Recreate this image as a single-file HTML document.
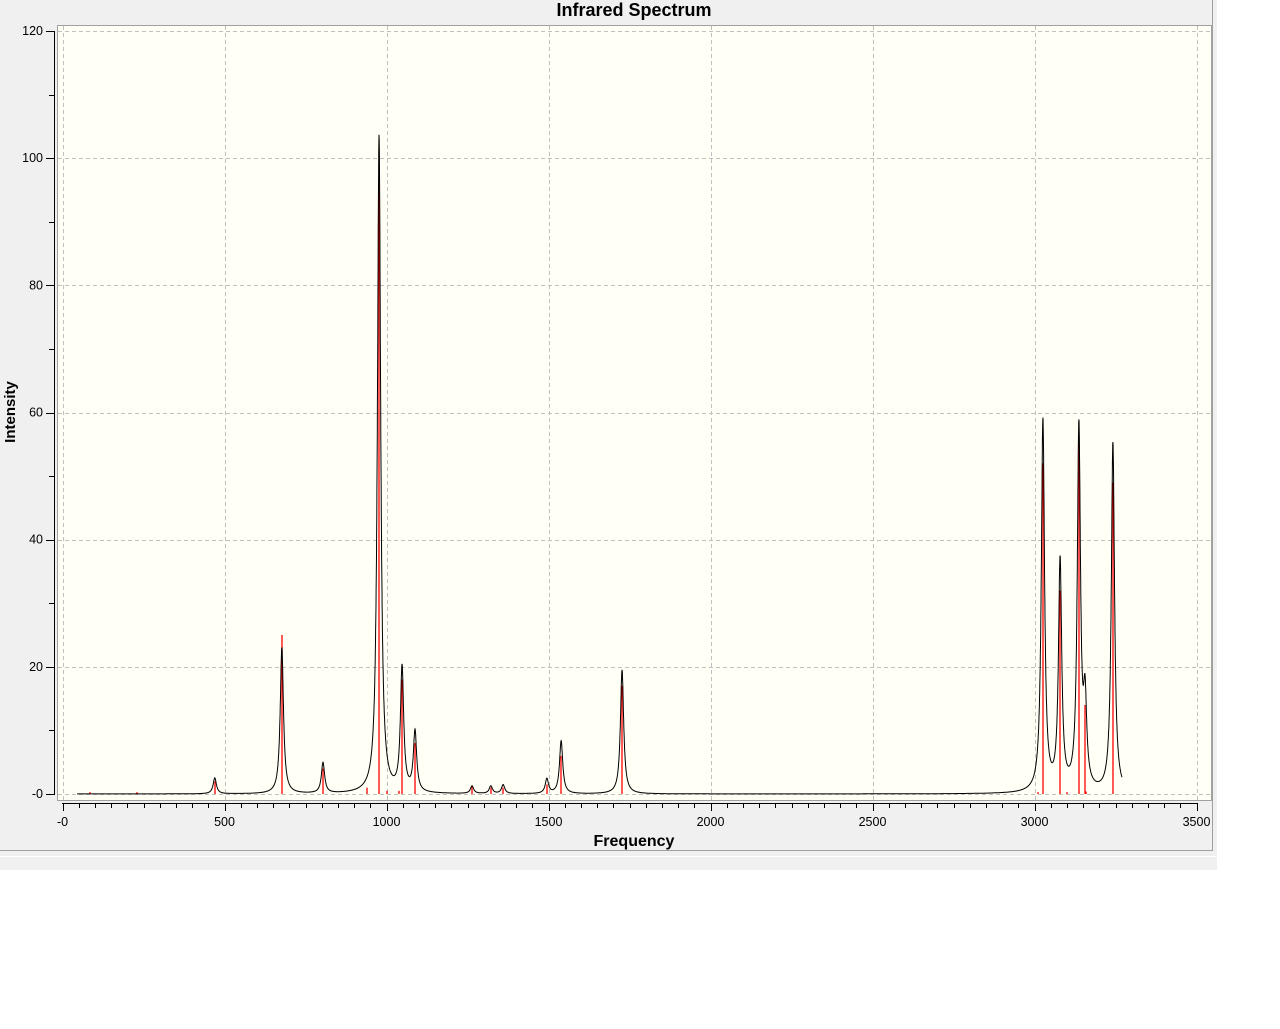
<!DOCTYPE html>
<html><head><meta charset="utf-8"><style>
body{margin:0;background:#fff;width:1280px;height:1024px;overflow:hidden;font-family:"Liberation Sans",sans-serif}
</style></head><body>
<svg width="1280" height="1024" xmlns="http://www.w3.org/2000/svg" font-family="Liberation Sans, sans-serif">
<rect x="0" y="0" width="1217" height="870" fill="#f0f0f0"/>
<line x1="0" y1="850.5" x2="1212" y2="850.5" stroke="#a0a0a0"/>
<line x1="1212.5" y1="0" x2="1212.5" y2="851" stroke="#a0a0a0"/>
<line x1="0" y1="856.5" x2="1217" y2="856.5" stroke="#fff"/>
<rect x="57.5" y="25.5" width="1154" height="775" fill="#fffff6" stroke="#a0a0a0"/>
<g stroke="#c0c0c0" stroke-dasharray="4,3" fill="none" id="grid"></g>
<text x="634" y="16" text-anchor="middle" font-size="18" font-weight="bold">Infrared Spectrum</text>
<text x="634" y="846" text-anchor="middle" font-size="16" font-weight="bold">Frequency</text>
<text transform="translate(15,412) rotate(-90)" text-anchor="middle" font-size="15" font-weight="bold">Intensity</text>
<g id="axes" stroke="#000" fill="none"></g>
<g id="labels" font-size="12.5" fill="#000"></g>
<g id="sticks" stroke="#f00" stroke-width="1.3"></g>
<path id="curve" fill="none" stroke="#000" stroke-width="1"/>
</svg>
<script>
const NS="http://www.w3.org/2000/svg";
const X=f=>62.5+f*0.324, Y=v=>794-v*6.358;
function el(p,t,a,txt){const e=document.createElementNS(NS,t);for(const k in a)e.setAttribute(k,a[k]);if(txt!=null)e.textContent=txt;document.getElementById(p).appendChild(e);}
for(let f=0;f<=3500;f+=500){const x=Math.round(X(f))+.5;el('grid','line',{x1:x,y1:26,x2:x,y2:800});}
for(let v=0;v<=120;v+=20){const y=Math.round(Y(v))+.5;el('grid','line',{x1:58,y1:y,x2:1211,y2:y});}
el('axes','line',{x1:62,y1:803.5,x2:1197,y2:803.5});
el('axes','line',{x1:54.5,y1:31,x2:54.5,y2:795});
for(let f=0;f<=3500;f+=50){const x=Math.round(X(f))+.5;el('axes','line',{x1:x,y1:803,x2:x,y2:f%500==0?811:808});}
for(let v=0;v<=120;v+=10){const y=Math.round(Y(v))+.5;el('axes','line',{x1:v%20==0?46:49,y1:y,x2:54,y2:y});}
for(let f=0;f<=3500;f+=500)el('labels','text',{x:X(f),y:826,'text-anchor':'middle'},f==0?'-0':f);
for(let v=0;v<=120;v+=20)el('labels','text',{x:43,y:Y(v)+4,'text-anchor':'end'},v==0?'-0':v);
const P=[[470,2.5,2],[677,23,25],[804,4.8,4],[977,103.5,96],[1048,19.5,18],[1088,9.5,8],[1264,1.2,1.2],[1322,1.2,1],[1360,1.4,1],[1495,2.3,1.5],[1539,8.3,6],[1727,19.5,17],[3026,58.5,52],[3079,36,32],[3137,57,55],[3156,13,14],[3242,55,49],[85,0,0.3],[230,0,0.3],[940,0,1],[1000,0,0.5],[1040,0,0.5],[3010,0,0.3],[3100,0,0.3],[3160,0,0.4]];
const w=6;let d='';
for(let f=45;f<=3270;f+=0.5){let s=0;for(const p of P){if(!p[1])continue;const u=(f-p[0])/w;s+=p[1]/(1+u*u);}d+=(d?'L':'M')+X(f).toFixed(1)+' '+Y(s).toFixed(1);}
document.getElementById('curve').setAttribute('d',d);
for(const p of P){const x=Math.round(X(p[0]));el('sticks','line',{x1:x,y1:794,x2:x,y2:Y(p[2])});}
</script>
</body></html>
